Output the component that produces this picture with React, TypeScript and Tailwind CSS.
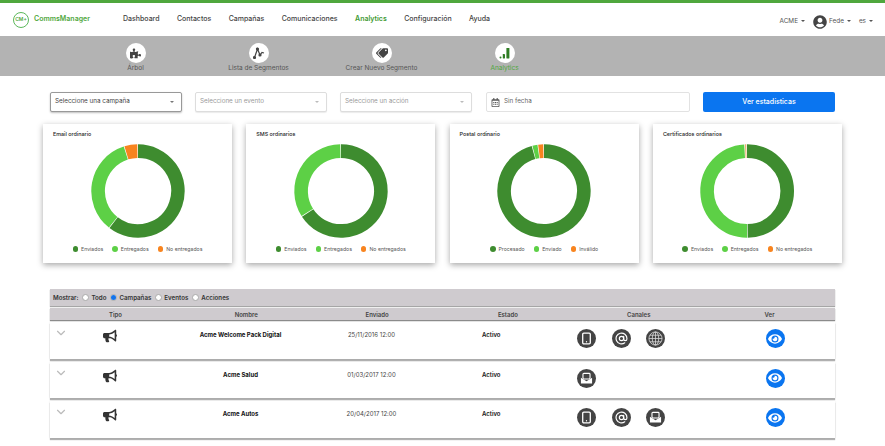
import { AtSign, ChevronDown, Smartphone } from 'lucide-react'
import { FaBullhorn, FaEye, FaPuzzlePiece, FaTags, FaUserCircle, FaRegCalendarAlt } from 'react-icons/fa'
import type { ReactNode } from 'react'

const DARK = '#3e8c2f'
const LIGHT = '#5dd046'
const ORANGE = '#f8841f'

const Caret = () => <span className="ml-[3px] inline-block border-x-[2px] border-t-[2px] border-x-transparent border-t-current align-middle" />

// arc from a to b, both in percent of the ring, clockwise from the top
const arc = (a: number, b: number) => {
    const r = 39.9
    const pt = (p: number) => {
        const t = (p / 100) * Math.PI * 2
        return `${(48 + r * Math.sin(t)).toFixed(2)} ${(48 - r * Math.cos(t)).toFixed(2)}`
    }
    return `M${pt(a)} A${r} ${r} 0 ${b - a > 50 ? 1 : 0} 1 ${pt(b)}`
}

const Donut = ({ parts }: { parts: { v: number; c: string }[] }) => {
    let start = 0
    return (
        <svg width="96" height="96" viewBox="0 0 96 96">
            {parts.map((p, i) => {
                const el = <path key={i} d={arc(start, start + p.v - 0.25)} fill="none" stroke={p.c} strokeWidth="13.6" />
                start += p.v
                return el
            })}
        </svg>
    )
}

const ChartCard = ({ title, parts, labels }: { title: string; parts: { v: number; c: string }[]; labels: string[] }) => {
    const colors = [DARK, LIGHT, ORANGE]
    return (
        <div className="h-[139px] w-[189px] bg-white pl-[10px] pt-[7px] shadow-[0_2px_6px_rgba(0,0,0,0.35)]">
            <div className="text-[5.4px] leading-[7px] font-medium text-[#222]">{title}</div>
            <div className="-ml-[10px] mt-[5px] flex justify-center">
                <Donut parts={parts} />
            </div>
            <div className="-ml-[10px] mt-[6px] flex justify-center gap-[9px]">
                {labels.map((l, i) => (
                    <div key={l} className="flex items-center gap-[3px] text-[5.2px] leading-[8px] text-[#555]">
                        <span className="h-[5.5px] w-[5.5px] rounded-full" style={{ backgroundColor: colors[i] }} />
                        {l}
                    </div>
                ))}
            </div>
        </div>
    )
}

const SubItem = ({ label, icon, active }: { label: string; icon: ReactNode; active?: boolean }) => (
    <div className="flex w-[123px] flex-col items-center">
        <div className={`flex h-[20px] w-[20px] items-center justify-center rounded-full bg-white ${active ? 'text-[#2f7d24]' : 'text-[#444]'}`}>
            {icon}
        </div>
        <div className={`mt-[1px] text-[6.5px] leading-[9px] ${active ? 'text-[#4fa73d]' : 'text-[#555]'}`}>{label}</div>
    </div>
)

const Select = ({ label, active }: { label: string; active?: boolean }) => (
    <div className={`flex h-[20px] w-[132px] items-center justify-between rounded-[2px] bg-white pl-[4px] pr-[7px] text-[6.3px] ${active ? 'border border-[#999] text-[#444] shadow-[0_1px_2px_rgba(0,0,0,0.25)]' : 'border border-[#ddd] text-[#999] shadow-[0_1px_1px_rgba(0,0,0,0.08)]'}`}>
        {label}
        <span className={active ? 'text-[#777]' : 'text-[#bbb]'}><Caret /></span>
    </div>
)

const Radio = ({ checked }: { checked?: boolean }) => (
    <span className="mr-[2px] flex h-[7px] w-[7px] items-center justify-center rounded-full border border-[#aaa] bg-white">
        {checked && <span className="h-[5px] w-[5px] rounded-full bg-[#1273eb]" />}
    </span>
)

const Channel = ({ children }: { children: ReactNode }) => (
    <div className="flex h-[19px] w-[19px] items-center justify-center rounded-full bg-[#444] text-white">{children}</div>
)

const Phone = () => <Channel><Smartphone size={13} strokeWidth={2.4} /></Channel>
const At = () => <Channel><AtSign size={13} strokeWidth={2.2} /></Channel>
const Web = () => (
    <Channel>
        <svg width="15" height="15" viewBox="0 0 16 16" fill="none" stroke="#ddd" strokeWidth="0.8">
            <circle cx="8" cy="8" r="7" />
            <ellipse cx="8" cy="8" rx="3.4" ry="7" />
            <path d="M8 1 V15 M1 8 H15 M2 4.5 H14 M2 11.5 H14" />
        </svg>
    </Channel>
)
const Mail = () => (
    <Channel>
        <svg width="13" height="13" viewBox="0 0 14 14">
            <rect x="3.2" y="1.5" width="7.6" height="6" rx="1" fill="none" stroke="white" strokeWidth="1.2" />
            <path d="M1 6.2 L7 10 L13 6.2 V12.5 H1 Z" fill="white" />
        </svg>
    </Channel>
)

const rows = [
    { name: 'Acme Welcome Pack Digital', date: '25/11/2016 12:00', channels: [<Phone key="p" />, <At key="a" />, <Web key="w" />] },
    { name: 'Acme Salud', date: '01/03/2017 12:00', channels: [<Mail key="m" />] },
    { name: 'Acme Autos', date: '20/04/2017 12:00', channels: [<Phone key="p" />, <At key="a" />, <Mail key="m" />] },
]

const navItems = ['Dashboard', 'Contactos', 'Campañas', 'Comunicaciones', 'Analytics', 'Configuración', 'Ayuda']

export default function App() {
    return (
        <div className="h-[446px] w-[885px] overflow-hidden bg-white font-['Inter',sans-serif]">
            <header className="flex h-[33px] items-center border-t-[3px] border-[#4fa73d] pr-[12px] box-content">
                <div className="flex w-[123px] items-center pl-[13px]">
                    <div className="flex h-[16px] w-[16px] items-center justify-center rounded-full border border-[#5cb85c] text-[5px] font-semibold text-[#4fa73d]">CM+</div>
                    <span className="ml-[5px] text-[7px] font-semibold text-[#4fa73d]">CommsManager</span>
                </div>
                <nav className="flex gap-[17.4px] text-[7px] font-medium text-[#444]">
                    {navItems.map((n) => (
                        <span key={n} className={n === 'Analytics' ? 'font-semibold text-[#3f9a33]' : ''}>{n}</span>
                    ))}
                </nav>
                <div className="ml-auto flex items-center pt-[5px] text-[6.4px] text-[#555]">
                    <span>ACME<Caret /></span>
                    <FaUserCircle className="ml-[8px] text-[#444]" size={14} />
                    <span className="ml-[2px]">Fede<Caret /></span>
                    <span className="ml-[8px]">es<Caret /></span>
                </div>
            </header>

            <div className="flex h-[40px] bg-[#b3b3b3] pl-[74px] pt-[7px]">
                <SubItem label="Árbol" icon={<FaPuzzlePiece size={11} />} />
                <SubItem label="Lista de Segmentos" icon={
                    <svg width="12" height="12" viewBox="0 0 12 12" fill="none" stroke="currentColor" strokeWidth="1.2">
                        <path d="M1.5 10.5 L4.5 2 L7 8 L9 5.5 L11 6" />
                        <circle cx="4.5" cy="2" r="1" fill="currentColor" />
                        <circle cx="7" cy="8" r="1" fill="currentColor" />
                        <circle cx="1.5" cy="10.5" r="1" fill="currentColor" />
                    </svg>
                } />
                <SubItem label="Crear Nuevo Segmento" icon={<FaTags size={12} className="-scale-x-100" />} />
                <SubItem label="Analytics" active icon={
                    <svg width="12" height="12" viewBox="0 0 12 12" fill="currentColor">
                        <rect x="0.5" y="9.5" width="2" height="2" rx="1" />
                        <rect x="3.8" y="7" width="2.2" height="4.5" rx="0.4" />
                        <rect x="7.4" y="1" width="3" height="10.5" rx="0.4" />
                    </svg>
                } />
            </div>

            <div className="mt-[16px] flex pl-[50px]">
                <Select label="Seleccione una campaña" active />
                <div className="w-[13px]" />
                <Select label="Seleccione un evento" />
                <div className="w-[13px]" />
                <Select label="Seleccione un acción" />
                <div className="ml-[14px] flex h-[20px] w-[204px] items-center rounded-[2px] border border-[#e2e2e2] pl-[4px] text-[6.3px] text-[#666]">
                    <FaRegCalendarAlt size={9} className="mr-[4px] text-[#555]" />
                    Sin fecha
                </div>
                <button className="ml-[13px] h-[20px] w-[132px] rounded-[2px] bg-[#0a75f0] text-[7px] font-medium text-white">Ver estadísticas</button>
            </div>

            <div className="mt-[12px] flex gap-[14.3px] pl-[43px]">
                <ChartCard title="Email ordinario" labels={['Enviados', 'Entregados', 'No entregados']}
                    parts={[{ v: 60.7, c: DARK }, { v: 34.6, c: LIGHT }, { v: 4.7, c: ORANGE }]} />
                <ChartCard title="SMS ordinarios" labels={['Enviados', 'Entregados', 'No entregados']}
                    parts={[{ v: 66, c: DARK }, { v: 34, c: LIGHT }]} />
                <ChartCard title="Postal ordinario" labels={['Procesado', 'Enviado', 'Inválido']}
                    parts={[{ v: 96, c: DARK }, { v: 2, c: LIGHT }, { v: 2, c: ORANGE }]} />
                <ChartCard title="Certificados ordinarios" labels={['Enviados', 'Entregados', 'No entregados']}
                    parts={[{ v: 50, c: DARK }, { v: 49.3, c: LIGHT }, { v: 0.7, c: '#f0b070' }]} />
            </div>

            <div className="mx-[50px] mt-[26px]">
                <div className="flex h-[16.5px] items-center bg-[#cfcbcf] pl-[3px] text-[6.2px] font-semibold text-[#333] shadow-[0_1px_1px_rgba(0,0,0,0.35)]">
                    <span className="mr-[4px]">Mostrar:</span>
                    <Radio /><span className="mr-[4px]">Todo</span>
                    <Radio checked /><span className="mr-[4px]">Campañas</span>
                    <Radio /><span className="mr-[4px]">Eventos</span>
                    <Radio /><span>Acciones</span>
                </div>
                <div className="mt-[2.5px] grid h-[12px] grid-cols-6 items-center bg-[#cfcbcf] text-center text-[6px] font-semibold text-[#444] shadow-[0_1px_1px_rgba(0,0,0,0.45)]">
                    <span>Tipo</span><span>Nombre</span><span>Enviado</span><span>Estado</span><span>Canales</span><span>Ver</span>
                </div>
                <div className="mt-[2px] flex flex-col gap-[3px]">
                    {rows.map((r) => (
                        <div key={r.name} className="relative h-[36.5px] bg-white shadow-[0_2px_1px_rgba(0,0,0,0.3),0_0_2px_rgba(0,0,0,0.1)]">
                            <ChevronDown className="absolute left-[4px] top-[4px] text-[#bbb]" size={14} strokeWidth={2} />
                            <div className="-ml-[6px] grid h-full w-[786px] grid-cols-6 text-[6px]">
                                <div className="flex justify-center pt-[7px]"><FaBullhorn size={14} className="text-[#333]" /></div>
                                <div className="pt-[8px] text-center font-bold text-[#111]">{r.name}</div>
                                <div className="pt-[8px] text-center text-[#444]">{r.date}</div>
                                <div className="pl-[45px] pt-[8px] font-semibold text-[#111]">Activo</div>
                                <div className="flex gap-[15.5px] pl-[9px] pt-[7px]">{r.channels}</div>
                                <div className="flex justify-center pl-[21px] pt-[7px]">
                                    <div className="flex h-[19px] w-[19px] items-center justify-center rounded-full bg-[#0a75f0] text-white"><FaEye size={14} /></div>
                                </div>
                            </div>
                        </div>
                    ))}
                </div>
            </div>
        </div>
    )
}
